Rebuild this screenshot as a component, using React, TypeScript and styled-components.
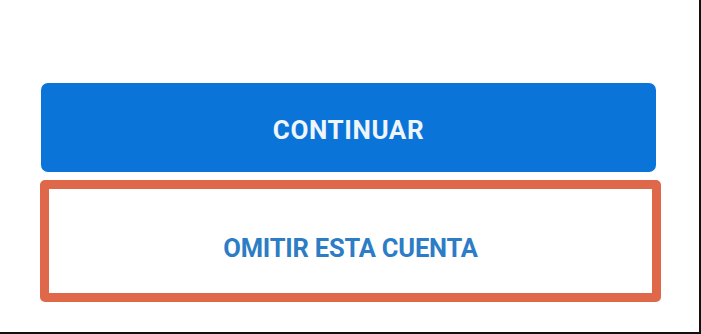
import React from "react";
import styled, { createGlobalStyle } from "styled-components";

const Global = createGlobalStyle`
  html, body { margin: 0; padding: 0; background: #ffffff; }
  * { box-sizing: border-box; }
`;

const Page = styled.div`
  width: 701px;
  height: 334px;
  background: #ffffff;
  border-right: 2px solid #111111;
  border-bottom: 2px solid #111111;
  display: flex;
  flex-direction: column;
  align-items: flex-start;
  padding: 83px 0 0 40px;
  font-family: Roboto, "Liberation Sans", Arial, sans-serif;
`;

const Stack = styled.div`
  display: flex;
  flex-direction: column;
  align-items: center;
  gap: 8px;
  width: 621px;
`;

const PrimaryButton = styled.button`
  width: 615px;
  height: 89px;
  border: none;
  border-radius: 7px;
  background: #0a74d8;
  color: #eef5fb;
  font-family: inherit;
  font-weight: 700;
  font-size: 26px;
  letter-spacing: 0.6px;
  display: flex;
  align-items: center;
  justify-content: center;
  padding: 4px 0 0 0;
  margin-left: -4px;
`;

const Highlight = styled.div`
  width: 621px;
  height: 122px;
  border: 9px solid #e0684a;
  border-radius: 5px;
  display: flex;
  align-items: center;
  justify-content: center;
  padding-top: 14px;
`;

const LinkButton = styled.button`
  border: none;
  background: transparent;
  color: #2c7cc6;
  font-family: inherit;
  font-weight: 700;
  font-size: 25.5px;
  letter-spacing: -0.2px;
  padding: 0;
`;

export default function App() {
  return (
    <>
      <Global />
      <Page>
        <Stack>
          <PrimaryButton>CONTINUAR</PrimaryButton>
          <Highlight>
            <LinkButton>OMITIR ESTA CUENTA</LinkButton>
          </Highlight>
        </Stack>
      </Page>
    </>
  );
}
